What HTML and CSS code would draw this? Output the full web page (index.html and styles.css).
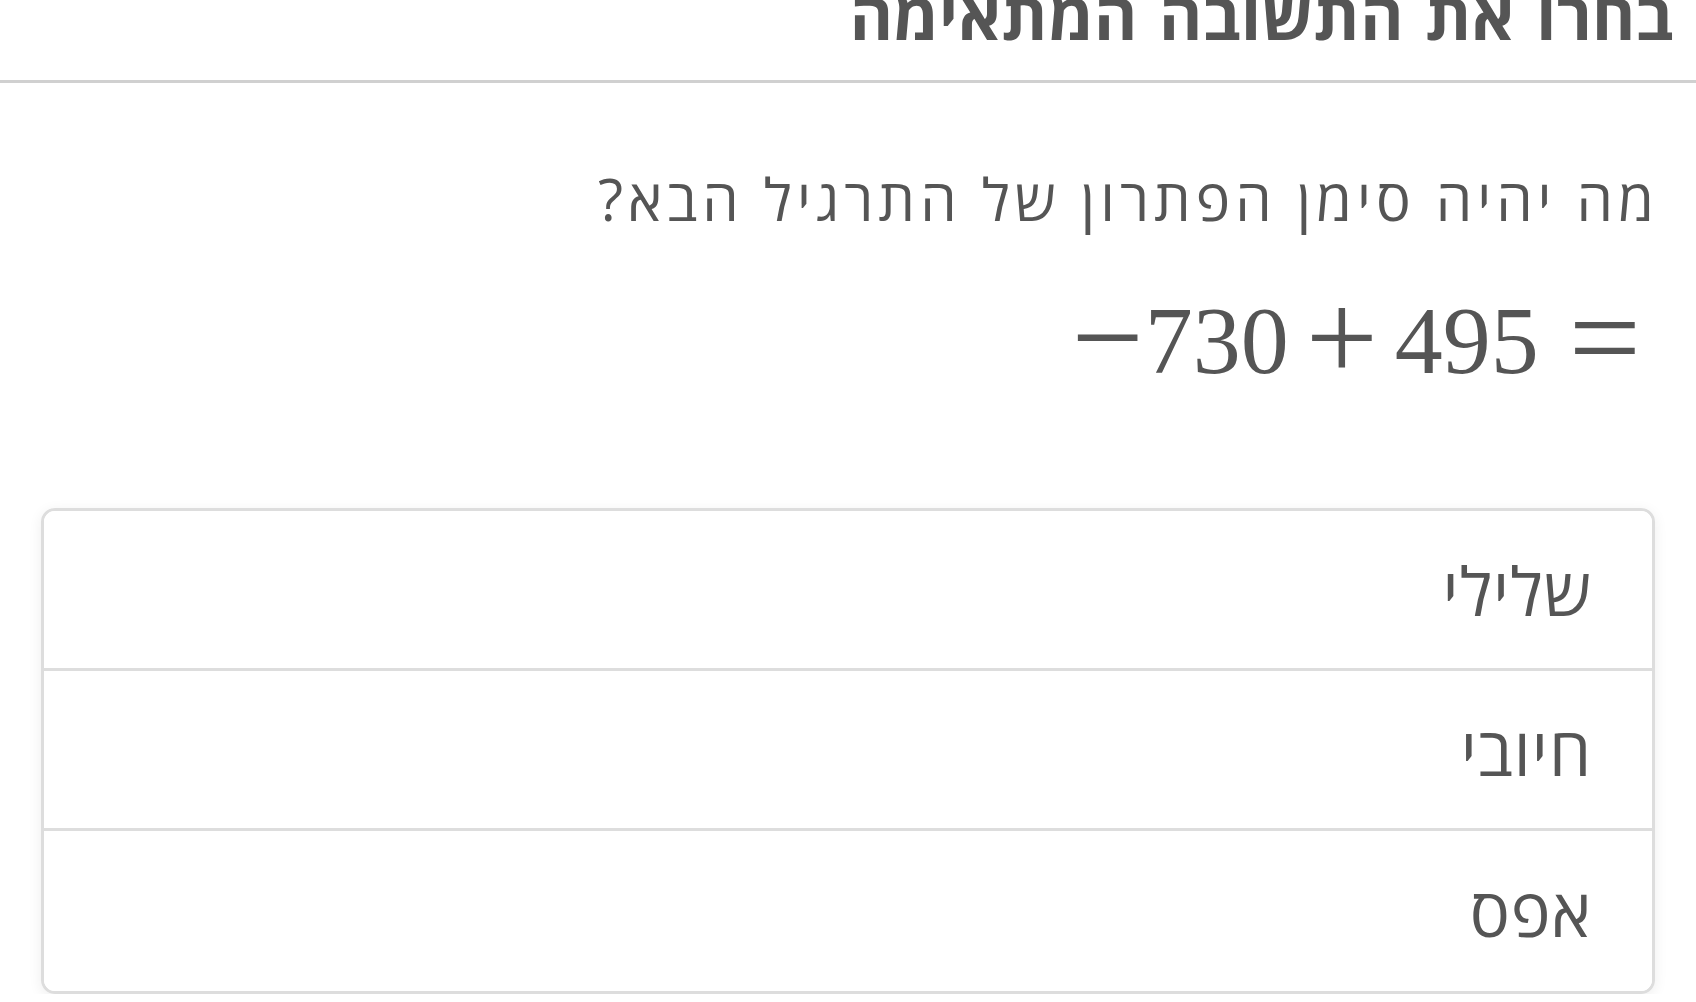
FILE: index.html
```html
<!DOCTYPE html>
<html lang="he" dir="rtl">
<head>
    <meta charset="UTF-8">
    <meta name="viewport" content="width=device-width, initial-scale=1.0">
    <title>תרגול - סימן הפתרון</title>
    <link rel="stylesheet" href="styles.css">
</head>
<body>
    <div class="header">
        <h1 class="title">בחרו את התשובה המתאימה</h1>
    </div>
    <div class="content">
        <p class="question">מה יהיה סימן הפתרון של התרגיל הבא?</p>
        <div class="math"><span class="op">&minus;</span>730<span class="op bin">+</span>495<span class="op rel">=</span></div>
        <div class="answers">
            <button class="answer">שלילי</button>
            <button class="answer">חיובי</button>
            <button class="answer">אפס</button>
        </div>
    </div>
</body>
</html>
```
FILE: styles.css
```css
*, *:before, *:after {
    box-sizing: border-box;
}
body {
    margin: 0;
    background: #ffffff;
    color: #555555;
    font-family: "Open Sans", "Liberation Sans", sans-serif;
    overflow: hidden;
}
/* page is scrolled a little, so the heading sits under the top edge */
.header {
    border-bottom: 3px solid #d0d0d0;
    height: 106px;
    margin-top: -23px;
    padding-right: 22px;
}
.title {
    margin: 0;
    font-size: 66px;
    font-weight: 700;
    letter-spacing: 0.3px;
    word-spacing: 4px;
    line-height: 74px;
}
.content {
    padding: 0 41px;
}
.question {
    margin: 76px -4px 0 0;
    font-size: 58px;
    letter-spacing: 5px;
    line-height: 80px;
}
.math {
    direction: ltr;
    text-align: right;
    font-family: "Liberation Serif", serif;
    font-size: 96px;
    line-height: 120px;
    margin-top: 42px;
    padding-right: 14px;
}
.op {
    display: inline-block;
    font-size: 128px;
    line-height: 0.8;
    vertical-align: -7px;
    margin-right: 1px;
}
.op.bin {
    margin: 0 17px;
}
.op.rel {
    margin: 0 0 0 30px;
}
.answers {
    margin-top: 107px;
    display: flex;
    flex-direction: column;
    border: 3px solid #dddddd;
    border-radius: 14px;
    box-shadow: 0 3px 14px rgba(0, 0, 0, 0.07);
    overflow: hidden;
}
.answer {
    height: 160px;
    border: none;
    border-bottom: 3px solid #dddddd;
    background: #ffffff;
    color: #555555;
    font-family: "Open Sans", "Liberation Sans", sans-serif;
    font-size: 67px;
    letter-spacing: 1px;
    text-align: right;
    padding: 0 60px 0 0;
    cursor: pointer;
}
.answer:last-child {
    border-bottom: none;
}
```
